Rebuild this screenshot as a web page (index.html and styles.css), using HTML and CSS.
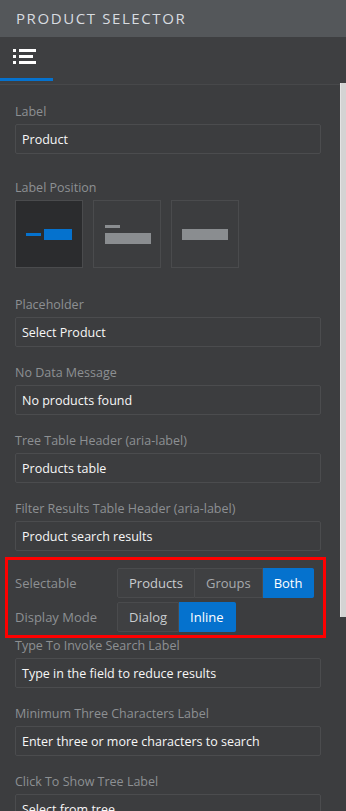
FILE: index.html
```html
<!DOCTYPE html>
<html lang="en">
<head>
<meta charset="UTF-8">
<meta name="viewport" content="width=device-width, initial-scale=1.0">
<title>Product Selector</title>
<link rel="stylesheet" href="styles.css">
</head>
<body>
<div class="panel">
    <div class="panel-title">PRODUCT SELECTOR</div>

    <div class="tabs">
        <div class="tab active">
            <svg width="24" height="16" viewBox="0 0 24 16">
                <rect x="0" y="0" width="3" height="3" fill="#fff"/>
                <rect x="6" y="0" width="17" height="3" fill="#fff"/>
                <rect x="0" y="6" width="3" height="3" fill="#fff"/>
                <rect x="6" y="6" width="14" height="3" fill="#fff"/>
                <rect x="0" y="12" width="3" height="3" fill="#fff"/>
                <rect x="6" y="12" width="17" height="3" fill="#fff"/>
            </svg>
        </div>
    </div>

    <div class="content">
        <div class="field">
            <label class="field-label">Label</label>
            <div class="input">Product</div>
        </div>

        <div class="field position-field">
            <label class="field-label">Label Position</label>
            <div class="positions">
                <div class="pos selected">
                    <span class="bar small"></span>
                    <span class="bar big"></span>
                </div>
                <div class="pos stacked">
                    <span class="bar small"></span>
                    <span class="bar big"></span>
                </div>
                <div class="pos">
                    <span class="bar big"></span>
                </div>
            </div>
        </div>

        <div class="field">
            <label class="field-label">Placeholder</label>
            <div class="input">Select Product</div>
        </div>

        <div class="field">
            <label class="field-label">No Data Message</label>
            <div class="input">No products found</div>
        </div>

        <div class="field">
            <label class="field-label">Tree Table Header (aria-label)</label>
            <div class="input">Products table</div>
        </div>

        <div class="field">
            <label class="field-label">Filter Results Table Header (aria-label)</label>
            <div class="input">Product search results</div>
        </div>

        <div class="options highlight">
            <div class="option-row">
                <span class="option-label">Selectable</span>
                <div class="segmented">
                    <span class="seg light">Products</span>
                    <span class="seg">Groups</span>
                    <span class="seg on">Both</span>
                </div>
            </div>
            <div class="option-row">
                <span class="option-label">Display Mode</span>
                <div class="segmented">
                    <span class="seg light">Dialog</span>
                    <span class="seg on">Inline</span>
                </div>
            </div>
        </div>

        <div class="field">
            <label class="field-label">Type To Invoke Search Label</label>
            <div class="input">Type in the field to reduce results</div>
        </div>

        <div class="field">
            <label class="field-label">Minimum Three Characters Label</label>
            <div class="input">Enter three or more characters to search</div>
        </div>

        <div class="field">
            <label class="field-label">Click To Show Tree Label</label>
            <div class="input">Select from tree</div>
        </div>
    </div>

    <div class="scrollbar"></div>
</div>
</body>
</html>
```

FILE: styles.css
```css
html, body {
    margin: 0;
    height: 100%;
    overflow: hidden;
}

body {
    font-family: "Open Sans", "Noto Sans", sans-serif;
    font-size: 12.5px;
    line-height: 18px;
    background: #3c3d3f;
    color: #f2f2f2;
}

.panel {
    position: relative;
    height: 100%;
}

.panel-title {
    height: 37px;
    line-height: 37px;
    padding-left: 16px;
    background: #54575a;
    color: #d8dce0;
    font-size: 15px;
    letter-spacing: 1.6px;
}

.tabs {
    height: 47px;
    background: #3e3f41;
    border-bottom: 1px solid #47484a;
    display: flex;
}

.tab {
    width: 53px;
    display: flex;
    align-items: center;
    justify-content: center;
    box-sizing: border-box;
    padding-bottom: 7px;
    padding-right: 4px;
}

.tab.active {
    border-bottom: 3px solid #0572ce;
    height: 44px;
    padding-top: 6px;
}

.content {
    padding: 18px 25px 0 15px;
}

.field {
    margin-bottom: 17px;
}

.field-label {
    display: block;
    color: #8d9093;
    margin-bottom: 3px;
}

.input {
    height: 30px;
    line-height: 29px;
    box-sizing: border-box;
    border: 1px solid #4b4c4e;
    border-radius: 2px;
    padding-left: 6px;
    color: #f7f7f7;
    white-space: nowrap;
    overflow: hidden;
}

.position-field {
    margin-top: 25px;
    margin-bottom: 28px;
}

.positions {
    display: flex;
    gap: 10px;
}

.pos {
    width: 68px;
    height: 68px;
    box-sizing: border-box;
    border: 1px solid #4a4b4d;
    display: flex;
    align-items: center;
    justify-content: center;
    gap: 3px;
}

.pos.selected {
    background: #2b2c2e;
}

.pos.stacked {
    flex-direction: column;
    align-items: flex-start;
    padding-left: 11px;
    gap: 5px;
}

.bar {
    display: block;
    background: #8a8d90;
}

.bar.small {
    width: 15px;
    height: 3px;
}

.bar.big {
    width: 46px;
    height: 11px;
}

.pos.selected .bar {
    background: #0572ce;
}

.pos.selected .bar.big {
    width: 28px;
}

.options {
    position: relative;
    display: flex;
    flex-direction: column;
    gap: 4px;
    margin-bottom: 5px;
}

.highlight::after {
    content: "";
    position: absolute;
    top: -11px;
    left: -10px;
    right: -5px;
    bottom: -6px;
    border: 3px solid #f00;
    pointer-events: none;
}

.option-row {
    display: flex;
    align-items: center;
}

.option-label {
    flex-shrink: 0;
    width: 102px;
    color: #8d9093;
    font-size: 13px;
}

.segmented {
    display: flex;
    height: 30px;
}

.seg {
    padding: 0 11px;
    line-height: 28px;
    border: 1px solid #4a4b4d;
    border-left-width: 0;
    background: #3f4042;
    color: #a7aaad;
    font-size: 13px;
}

.seg:first-child {
    border-left-width: 1px;
    border-radius: 2px 0 0 2px;
}

.seg:last-child {
    border-radius: 0 2px 2px 0;
}

.seg.light {
    color: #c9cccf;
}

.seg.on {
    background: #0572ce;
    border-color: #0572ce;
    color: #fff;
}

.scrollbar {
    position: absolute;
    top: 83px;
    right: 0;
    width: 5px;
    height: 534px;
    background: #d3d3d3;
    border-left: 1px solid #e4e4e4;
}
```
